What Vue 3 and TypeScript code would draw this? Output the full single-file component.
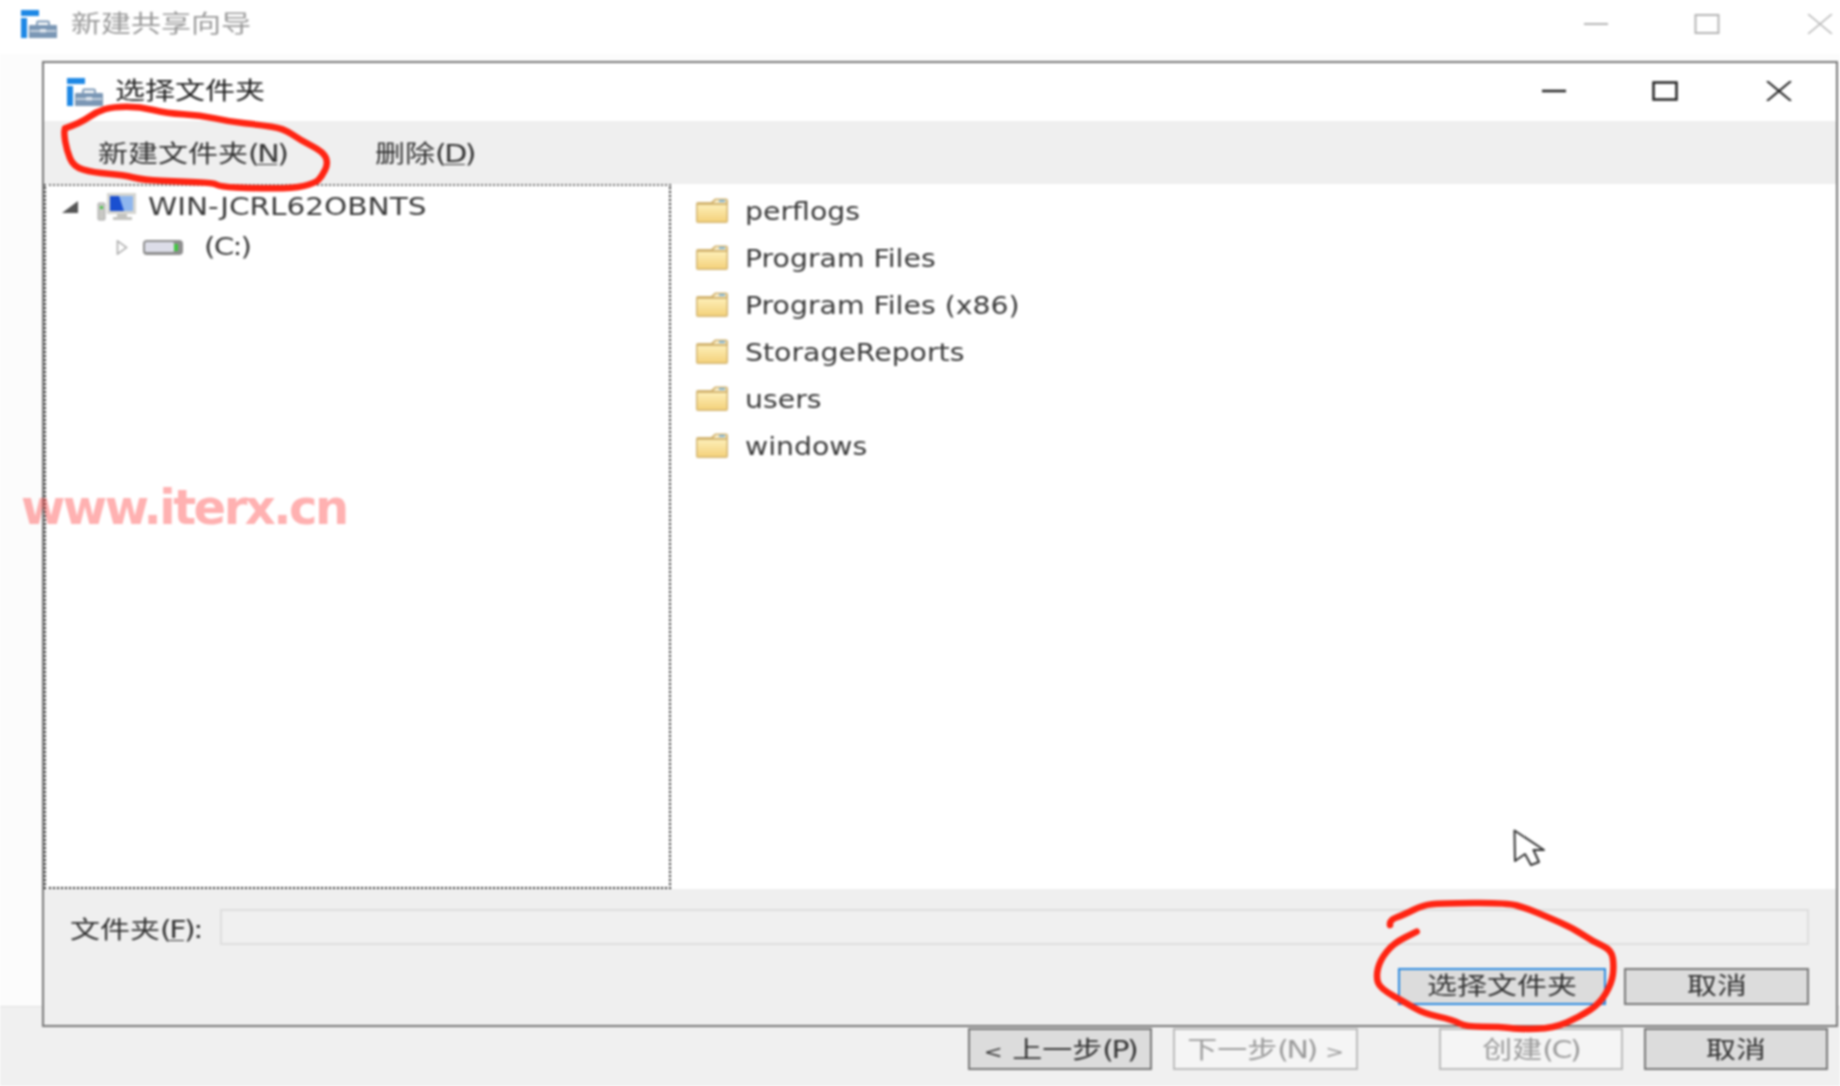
<script setup lang="ts">
type Pt = [number, number]

const folders: string[] = ['perflogs', 'Program Files', 'Program Files (x86)', 'StorageReports', 'users', 'windows']

const ringA: Pt[] = [[195,385],[240,370],[290,335],[340,320],[420,320],[500,340],[600,345],[690,365],[780,375],[850,385],[900,420],[970,455],[985,490],[965,530],[945,550],[880,565],[760,565],[660,560],[640,548],[540,545],[430,540],[370,525],[280,518],[220,500],[200,450],[192,400],[195,385]]
const ringB: Pt[] = [[150,375],[148,360],[190,345],[250,315],[300,310],[500,308],[560,325],[620,350],[700,385],[760,425],[815,450],[822,500],[815,550],[780,610],[720,650],[640,685],[540,688],[480,680],[375,680],[340,660],[250,640],[200,610],[120,565],[108,530],[120,480],[160,430],[230,395]]

const toPath = (pts: Pt[], ox: number, oy: number): string => {
  const p = pts.map(([x, y]): Pt => [ox + x / 3, oy + y / 3])
  let d = `M${p[0][0].toFixed(1)} ${p[0][1].toFixed(1)}`
  for (let i = 1; i < p.length - 1; i++) {
    const mx = (p[i][0] + p[i + 1][0]) / 2
    const my = (p[i][1] + p[i + 1][1]) / 2
    d += `Q${p[i][0].toFixed(1)} ${p[i][1].toFixed(1)} ${mx.toFixed(1)} ${my.toFixed(1)}`
  }
  const last = p[p.length - 1]
  return `${d}L${last[0].toFixed(1)} ${last[1].toFixed(1)}`
}

const ringAPath = toPath(ringA, 0, 0)
const ringBPath = toPath(ringB, 1340, 800)
</script>

<template>
  <div class="page">
    <div class="blur">
      <header class="outer-title">
        <svg class="app-icon" viewBox="0 0 36 28"><rect x="0" y="0" width="18" height="6" fill="#1e88e5"/><rect x="0" y="8" width="6" height="20" fill="#1e88e5"/><path d="M8 16q0-1 1-1h26q1 0 1 1v12H8z" fill="#7b97b5"/><path d="M16 15v-2.500q0-1 1-1h10q1 0 1 1V15" fill="none" stroke="#7b97b5" stroke-width="1.800"/><path d="M9 21h26" stroke="#dfe6ee" stroke-width="1.500"/><rect x="19" y="19" width="6" height="3.500" fill="#dfe6ee"/></svg>
        <span class="txt muted">新建共享向导</span>
        <div class="controls outer-controls">
          <svg class="ctl" viewBox="0 0 26 20"><path d="M1 10h24" stroke="currentColor" stroke-width="2"/></svg>
          <svg class="ctl" viewBox="0 0 26 20"><rect x="1.500" y="1" width="23" height="18" fill="none" stroke="currentColor" stroke-width="2"/></svg>
          <svg class="ctl" viewBox="0 0 26 20"><path d="M1 0l24 20M25 0L1 20" stroke="currentColor" stroke-width="1.500"/></svg>
        </div>
      </header>
      <main class="outer-body"></main>
      <footer class="outer-foot">
        <button class="btn dark"><span class="txt btxt"><span class="chev">&lt;</span> 上一步<span class="par">(P)</span></span></button>
        <button class="btn off"><span class="txt btxt">下一步<span class="par">(N)</span> <span class="chev">&gt;</span></span></button>
        <button class="btn off create"><span class="txt btxt">创建<span class="par">(C)</span></span></button>
        <button class="btn dark"><span class="txt btxt">取消</span></button>
      </footer>

      <section class="dialog">
        <header class="d-title">
          <svg class="app-icon" viewBox="0 0 36 28"><rect x="0" y="0" width="18" height="6" fill="#1e88e5"/><rect x="0" y="8" width="6" height="20" fill="#1e88e5"/><path d="M8 16q0-1 1-1h26q1 0 1 1v12H8z" fill="#7b97b5"/><path d="M16 15v-2.500q0-1 1-1h10q1 0 1 1V15" fill="none" stroke="#7b97b5" stroke-width="1.800"/><path d="M9 21h26" stroke="#dfe6ee" stroke-width="1.500"/><rect x="19" y="19" width="6" height="3.500" fill="#dfe6ee"/></svg>
          <span class="txt dark-text">选择文件夹</span>
          <div class="controls inner-controls">
            <svg class="ctl" viewBox="0 0 26 20"><path d="M1 10h24" stroke="currentColor" stroke-width="2.500"/></svg>
            <svg class="ctl" viewBox="0 0 26 20"><rect x="1.500" y="1.500" width="23" height="17" fill="none" stroke="currentColor" stroke-width="2.500"/></svg>
            <svg class="ctl" viewBox="0 0 26 20"><path d="M1 0l24 20M25 0L1 20" stroke="currentColor" stroke-width="2"/></svg>
          </div>
        </header>

        <nav class="toolbar">
          <span class="tool first"><span class="txt">新建文件夹<span class="par">(<u>N</u>)</span></span></span>
          <span class="tool second"><span class="txt">删除<span class="par">(<u>D</u>)</span></span></span>
        </nav>

        <div class="panes">
          <aside class="tree">
            <div class="tree-row root">
              <svg class="arrow-open" viewBox="0 0 16 12"><path d="M16 0v12H0z" fill="#555"/></svg>
              <svg class="pc" viewBox="0 0 40 28">
                <rect x="1" y="10" width="7" height="17" rx="1" fill="#c8c8c4" stroke="#aaa"/>
                <rect x="3" y="13" width="3" height="3" fill="#4cc24c"/>
                <rect x="10" y="0" width="29" height="21" fill="#d5d5d0"/>
                <path d="M13 3h23v15H13z" fill="#1a4fd0"/>
                <path d="M22 3h14v15H27z" fill="#8fb6ee"/>
                <path d="M20 21h10v3h5v3H16v-3h4z" fill="#c4c4c0"/>
              </svg>
              <span class="txt latin tree-txt">WIN-JCRL62OBNTS</span>
            </div>
            <div class="tree-row drive-row">
              <svg class="arrow-closed" viewBox="0 0 12 15"><path d="M1.500 1v13l9-6.500z" fill="#fff" stroke="#a8a8a8" stroke-width="1.500"/></svg>
              <svg class="drive" viewBox="0 0 42 17">
                <rect x="1" y="1" width="40" height="15" rx="4" fill="#8e8e8e"/>
                <rect x="3" y="3" width="29" height="10" rx="1.500" fill="#dcdde8"/>
                <rect x="32" y="5" width="4" height="7" fill="#42c742"/>
              </svg>
              <span class="txt latin tree-txt tight">(C:)</span>
            </div>
          </aside>

          <div class="list">
            <div v-for="name in folders" :key="name" class="file-row">
              <svg class="folder" viewBox="0 0 34 25">
                <defs>
                  <linearGradient id="fold" x1="0" y1="0" x2="0" y2="1">
                    <stop offset="0" stop-color="#fdeeb6"/>
                    <stop offset="1" stop-color="#f4d27c"/>
                  </linearGradient>
                </defs>
                <path d="M1 6q0-2 2-2h13l4-3.500h11q2 0 2 2V23q0 2-2 2H3q-2 0-2-2z" fill="#d4b673"/>
                <path d="M19 4l2-2h10v3H19z" fill="#f8ecc8"/>
                <rect x="24" y="2" width="6" height="2" fill="#7fb6dc"/>
                <path d="M2.500 7h29v16.500h-29z" fill="url(#fold)"/>
              </svg>
              <span class="txt latin list-txt">{{ name }}</span>
            </div>
          </div>
        </div>

        <div class="bottom">
          <div class="path-row">
            <label class="path-label"><span class="txt">文件夹<span class="par">(<u>F</u>):</span></span></label>
            <div class="path-input"></div>
          </div>
          <div class="actions">
            <button class="btn dark focus"><span class="txt btxt">选择文件夹</span></button>
            <button class="btn dark"><span class="txt btxt">取消</span></button>
          </div>
        </div>
      </section>

      <svg class="cursor" viewBox="0 0 32 38">
        <path d="M1.500 1.500L2 32l10-7 6 11 8-3-5.500-12H31z" fill="#fff" stroke="#333" stroke-width="2" stroke-linejoin="round"/>
      </svg>

      <div class="watermark">www.iterx.cn</div>

      <svg class="ink" viewBox="0 0 1840 1086">
        <path :d="ringAPath" />
        <path :d="ringBPath" />
      </svg>
    </div>
  </div>
</template>

<style>
html, body { margin: 0; background: #fff; }
</style>

<style scoped>
.page { width: 1840px; height: 1086px; overflow: hidden; }
.blur {
  position: relative;
  width: 1840px;
  height: 1086px;
  display: flex;
  flex-direction: column;
  filter: blur(0.9px);
  background: #fff;
  font-family: "DejaVu Sans", "Noto Sans CJK SC", sans-serif;
  font-size: 24px;
  color: #333;
}
.txt {
  display: inline-block;
  white-space: pre;
  transform: scaleX(1.25);
  transform-origin: left center;
  line-height: 1.2;
}
.btxt { transform-origin: center; }
.par { font-size: 24px; letter-spacing: -2px; }
.chev { font-size: 18px; }
.tight { letter-spacing: -1.500px; }
.muted { color: #9a9a9a; margin-left: 14px; }
.dark-text { color: #222; margin-left: 12px; }
u { text-underline-offset: 2px; text-decoration-thickness: 1px; }

.outer-title {
  height: 54px;
  flex: none;
  display: flex;
  align-items: center;
  padding: 0 7px 6px 21px;
  box-sizing: border-box;
}
.app-icon { width: 36px; height: 28px; flex: none; }
.controls { margin-left: auto; display: flex; }
.ctl { width: 26px; height: 20px; display: block; }
.outer-controls { gap: 87px; color: #b5b5b5; }
.outer-controls .ctl:first-child { margin-right: -2px; }
.inner-controls { gap: 87px; color: #222; margin: 0 44px 2px auto; }
.inner-controls .ctl:nth-child(2) { margin-left: -1px; margin-right: 1px; }
.inner-controls .ctl:first-child { margin-left: -1px; margin-right: -1px; }

.outer-body { flex: 1; background: #fcfcfc; }
.outer-foot {
  height: 80px;
  flex: none;
  box-sizing: border-box;
  background: #f0f0f0;
  border-top: 1px solid #e2e2e2;
  display: flex;
  align-items: flex-start;
  padding: 21px 12px 0 968px;
  gap: 21px;
}
.outer-foot .btxt { margin-top: 3px; }
.create { margin-left: 60px; }

.btn {
  width: 185px;
  height: 42px;
  box-sizing: border-box;
  padding: 0;
  font: inherit;
  display: flex;
  align-items: center;
  justify-content: center;
  background: #dcdcdc;
  color: #333;
  border: 2px solid #777;
}
.btn.off { background: #f5f5f5; color: #9b9b9b; border-color: #bcbcbc; }

.dialog {
  position: absolute;
  left: 42px;
  top: 61px;
  width: 1796px;
  height: 966px;
  box-sizing: border-box;
  border: 2px solid #777;
  background: #fff;
  display: flex;
  flex-direction: column;
}
.d-title {
  height: 58px;
  flex: none;
  display: flex;
  align-items: center;
  padding: 0 0 1px 23px;
  box-sizing: border-box;
}
.toolbar {
  height: 63px;
  flex: none;
  background: #efefef;
  display: flex;
  align-items: center;
  color: #333;
  box-sizing: border-box;
  padding-top: 4px;
}
.tool { display: block; }
.first { margin-left: 54px; width: 277px; }
.second { width: 110px; }

.panes { flex: 1; display: flex; min-height: 0; }
.tree {
  width: 627px;
  flex: none;
  box-sizing: border-box;
  border: 2px dotted #222;
  border-top-color: #666;
  padding-top: 1px;
}
.tree-row { display: flex; align-items: center; height: 40px; }
.latin { color: #3a3a3a; }
.tree-txt { transform: scaleX(1.23); }
.list-txt { transform: scaleX(1.18); margin-top: 4px; }
.root { padding-left: 16px; }
.arrow-open { width: 16px; height: 12px; flex: none; }
.pc { width: 40px; height: 28px; margin-left: 19px; margin-right: 11px; flex: none; }
.drive-row { padding-left: 70px; }
.arrow-closed { width: 12px; height: 15px; flex: none; }
.drive { width: 42px; height: 17px; margin-left: 14px; margin-right: 20px; flex: none; }

.list { flex: 1; background: #fff; padding-top: 3px; }
.file-row { display: flex; align-items: center; height: 47px; padding-left: 24px; }
.folder { width: 34px; height: 25px; margin-right: 16px; flex: none; }

.bottom {
  flex: none;
  height: 136px;
  background: #efefef;
  box-sizing: border-box;
  padding: 20px 27px 0 0;
}
.path-row { display: flex; align-items: center; height: 36px; }
.path-label { width: 176px; padding: 6px 0 0 26px; flex: none; box-sizing: border-box; }
.path-input {
  flex: 1;
  height: 36px;
  box-sizing: border-box;
  border: 2px solid #dedede;
  background: #f0f0f0;
}
.actions { display: flex; justify-content: flex-end; gap: 18px; margin-top: 23px; }
.actions .btn { height: 37px; }
.actions .focus { width: 208px; border-color: #2b8ae0; }

.cursor { position: absolute; left: 1513px; top: 829px; width: 32px; height: 38px; }
.watermark {
  position: absolute;
  left: 21px;
  top: 477px;
  font-family: "DejaVu Sans", sans-serif;
  font-weight: 700;
  font-size: 48px;
  line-height: 60px;
  letter-spacing: -2.500px;
  color: rgba(255, 60, 60, 0.4);
}
.ink { position: absolute; inset: 0; width: 1840px; height: 1086px; pointer-events: none; }
.ink path { fill: none; stroke: #ff2412; stroke-width: 6.500; stroke-linejoin: round; stroke-linecap: round; }
</style>
